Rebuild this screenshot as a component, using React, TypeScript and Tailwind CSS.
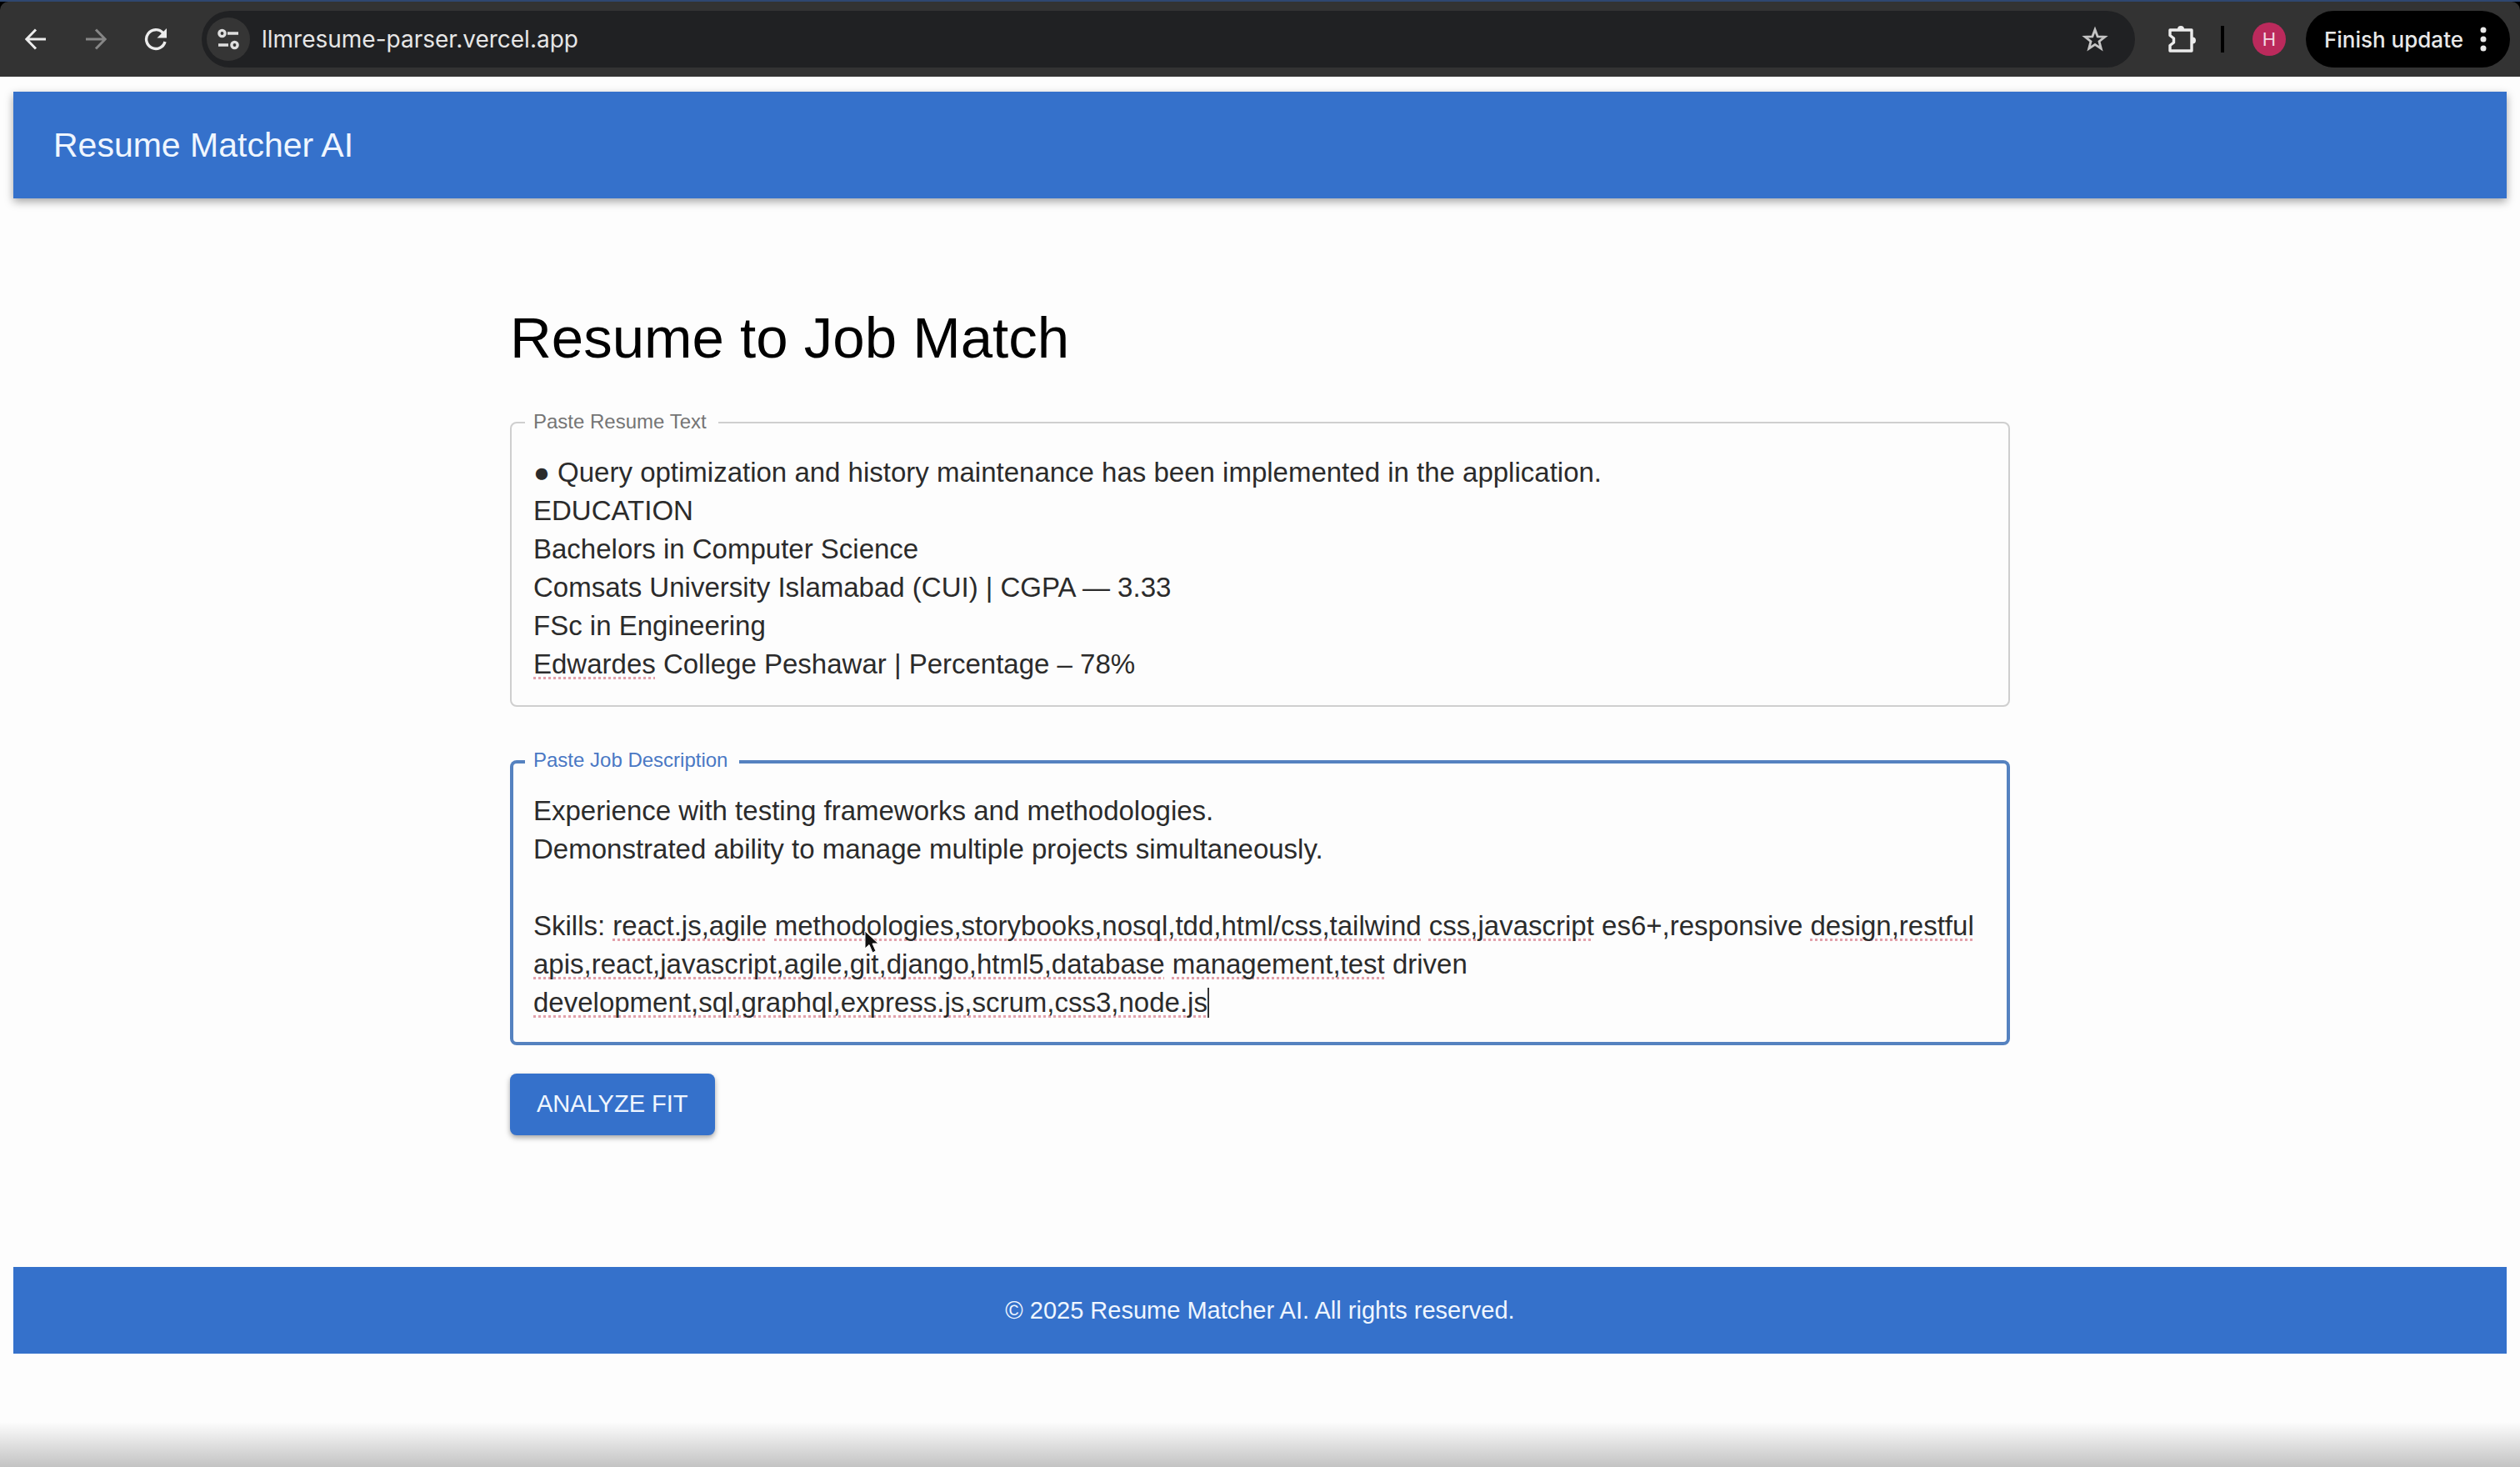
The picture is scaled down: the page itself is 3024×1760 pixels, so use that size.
import React from "react";

type Segment = { text: string; flagged?: boolean };

const RESUME: Segment[] = [
  {
    text:
      "● Query optimization and history maintenance has been implemented in the application.\n" +
      "EDUCATION\n" +
      "Bachelors in Computer Science\n" +
      "Comsats University Islamabad (CUI) | CGPA — 3.33\n" +
      "FSc in Engineering\n",
  },
  { text: "Edwardes", flagged: true },
  { text: " College Peshawar | Percentage – 78%" },
];

const JOB: Segment[] = [
  {
    text:
      "Experience with testing frameworks and methodologies.\n" +
      "Demonstrated ability to manage multiple projects simultaneously.\n\nSkills: ",
  },
  { text: "react.js,agile", flagged: true },
  { text: " " },
  { text: "methodologies,storybooks,nosql,tdd,html/css,tailwind", flagged: true },
  { text: " " },
  { text: "css,javascript", flagged: true },
  { text: " es6+,responsive " },
  { text: "design,restful", flagged: true },
  { text: " " },
  { text: "apis,react,javascript,agile,git,django,html5,database", flagged: true },
  { text: " " },
  { text: "management,test", flagged: true },
  { text: " driven " },
  { text: "development,sql,graphql,express.js,scrum,css3,node.js", flagged: true },
];

const EDITOR_TEXT = "px-[28px] pt-[38px] pb-[28px] text-[33px] leading-[46px] whitespace-pre-wrap";

function TextField({
  id,
  label,
  segments,
  focused = false,
}: {
  id: string;
  label: string;
  segments: Segment[];
  focused?: boolean;
}) {
  const value = segments.map((s) => s.text).join("");
  return (
    <div className="relative grid">
      <label
        htmlFor={id}
        className={`absolute -top-[16px] left-[18px] z-10 bg-[#fdfdfd] pr-[14px] pl-[10px] text-[24px] leading-[32px] ${
          focused ? "text-[#4a78c4]" : "text-[#757575]"
        }`}
      >
        {label}
      </label>
      <div
        aria-hidden="true"
        className={`pointer-events-none col-start-1 row-start-1 text-transparent ${EDITOR_TEXT}`}
      >
        {segments.map((s, i) =>
          s.flagged ? (
            <span
              key={i}
              className="underline decoration-[#e3a0aa] decoration-dotted decoration-[3px] underline-offset-[4px] [text-decoration-skip-ink:none]"
            >
              {s.text}
            </span>
          ) : (
            s.text
          ),
        )}
        {focused && <span className="-mr-[2px] inline-block h-[36px] w-[2px] bg-[#333] align-text-bottom" />}
      </div>
      <textarea
        id={id}
        defaultValue={value}
        rows={6}
        spellCheck={false}
        className={`col-start-1 row-start-1 w-full resize-none overflow-hidden rounded-[8px] bg-transparent text-[#2b2b2b] outline-none ${EDITOR_TEXT} ${
          focused ? "ring-4 ring-[#5582c0] ring-inset" : "ring-2 ring-[#cfcfcf] ring-inset"
        }`}
      />
    </div>
  );
}

function BrowserBar() {
  return (
    <div className="bg-black">
      <div className="h-[2px] bg-[#2f4770]" />
      <div className="flex h-[90px] items-center rounded-t-[10px] bg-[#333333] pr-[12px] pl-[22px] font-['Inter',sans-serif]">
        <button aria-label="Back" className="mr-[30px] flex size-[42px] items-center justify-center text-[#ececec]">
          <svg viewBox="0 0 26 26" className="size-[26px]" fill="none" stroke="currentColor" strokeWidth="3">
            <path d="M13 1.5 1.8 13 13 24.500M2.500 13H25" />
          </svg>
        </button>
        <button aria-label="Forward" className="mr-[30px] flex size-[42px] items-center justify-center text-[#868686]">
          <svg viewBox="0 0 26 26" className="size-[26px]" fill="none" stroke="currentColor" strokeWidth="3">
            <path d="M13 1.5 24.200 13 13 24.500M23.500 13H1" />
          </svg>
        </button>
        <button aria-label="Reload" className="mr-[34px] flex size-[42px] items-center justify-center text-[#ececec]">
          <svg viewBox="0 0 28 28" className="size-[28px]" fill="none" stroke="currentColor" strokeWidth="3.400">
            <path d="M25 17A11.400 11.400 0 1 1 22.500 6.500" />
            <path d="M27 1v11.500H15.500Z" fill="currentColor" stroke="none" />
          </svg>
        </button>
        <div className="flex h-[68px] flex-1 items-center rounded-full bg-[#202123] pr-[32px] pl-[6px]">
          <button
            aria-label="View site information"
            className="mr-[14px] flex size-[52px] items-center justify-center rounded-full bg-[#353535] text-[#dedede]"
          >
            <svg viewBox="0 0 26 26" className="size-[26px]" fill="none" stroke="currentColor" strokeWidth="3.400">
              <circle cx="5.500" cy="6" r="3.600" />
              <path d="M12 6h13M1 20h12" />
              <circle cx="20.500" cy="20" r="3.600" />
            </svg>
          </button>
          <input
            aria-label="Address"
            defaultValue="llmresume-parser.vercel.app"
            className="min-w-0 flex-1 bg-transparent text-[28px] leading-[36px] text-[#e6e6e6] outline-none"
          />
          <button aria-label="Bookmark this tab" className="text-[#c4c4c4]">
            <svg viewBox="0 0 32 32" className="size-[32px]" fill="none" stroke="currentColor" strokeWidth="2.800">
              <path d="m16 4.500 3.100 8.300 8.800.4-6.900 5.500 2.300 8.500L16 22.400l-7.300 4.800 2.300-8.500-6.900-5.500 8.800-.4Z" />
            </svg>
          </button>
        </div>
        <button aria-label="Extensions" className="ml-[38px] text-[#ececec]">
          <svg viewBox="0 0 36 36" className="size-[36px]" fill="none" stroke="currentColor" strokeWidth="3.400" strokeLinejoin="round">
            <path d="M4 7h26v25H4v-6.500l4.500-3.500v-5L4 13.500Z" />
            <path d="M13 6a4 4 0 0 1 8 0ZM31 15.500a4 4 0 0 1 0 8Z" fill="currentColor" stroke="none" />
          </svg>
        </button>
        <div className="ml-[29px] h-[32px] w-[4px] bg-black" />
        <button
          aria-label="Profile"
          className="ml-[34px] flex size-[40px] items-center justify-center rounded-full bg-[#bb2a5c] text-[22px] text-[#f3dbe4]"
        >
          H
        </button>
        <button className="ml-[24px] flex h-[68px] items-center gap-[20px] rounded-full bg-black pr-[28px] pl-[22px] text-[26px] font-medium text-[#e8e8e8]">
          Finish update
          <svg viewBox="0 0 8 32" className="h-[32px] w-[8px]" fill="currentColor">
            <circle cx="4" cy="5" r="3.500" />
            <circle cx="4" cy="16" r="3.500" />
            <circle cx="4" cy="27" r="3.500" />
          </svg>
        </button>
      </div>
    </div>
  );
}

export default function App() {
  return (
    <div className="flex min-h-screen flex-col bg-[#fdfdfd] font-['Liberation_Sans',Arial,sans-serif]">
      <BrowserBar />
      <div className="flex flex-col px-[16px] pt-[18px]">
        <header className="flex h-[128px] items-center bg-[#3571cb] px-[48px] shadow-[0_4px_10px_rgba(0,0,0,0.35)]">
          <p className="text-[41px] leading-[64px] text-[#eff6ff]">Resume Matcher AI</p>
        </header>
        <main className="mx-auto w-full max-w-[1800px] pt-[126px] pb-[158px]">
          <h1 className="text-[69px] leading-[84px] text-black">Resume to Job Match</h1>
          <form className="flex flex-col items-start" onSubmit={(e) => e.preventDefault()}>
            <div className="mt-[58px] w-full">
              <TextField id="resume" label="Paste Resume Text" segments={RESUME} />
            </div>
            <div className="mt-[64px] w-full">
              <TextField id="job" label="Paste Job Description" segments={JOB} focused />
            </div>
            <button
              type="submit"
              className="mt-[34px] h-[74px] rounded-[8px] bg-[#3571cb] px-[32px] text-[29px] text-[#eff6ff] shadow-[0_3px_6px_rgba(0,0,0,0.35)]"
            >
              ANALYZE FIT
            </button>
          </form>
        </main>
        <footer className="bg-[#3571cb] py-[32px] text-center text-[29px] leading-[40px] text-[#eff6ff]">
          © 2025 Resume Matcher AI. All rights reserved.
        </footer>
      </div>
      <div className="mt-auto h-[54px] bg-linear-to-b from-[#fdfdfd] to-[#c3c3c3]" />
      <svg
        viewBox="0 0 20 30"
        className="pointer-events-none absolute top-[1116px] left-[1036px] h-[30px] w-[20px]"
        fill="#111"
        stroke="#fff"
        strokeWidth="1"
      >
        <path d="M2 1v21l5-4.500 4 9.500 4-2-4-9h7Z" />
      </svg>
    </div>
  );
}
